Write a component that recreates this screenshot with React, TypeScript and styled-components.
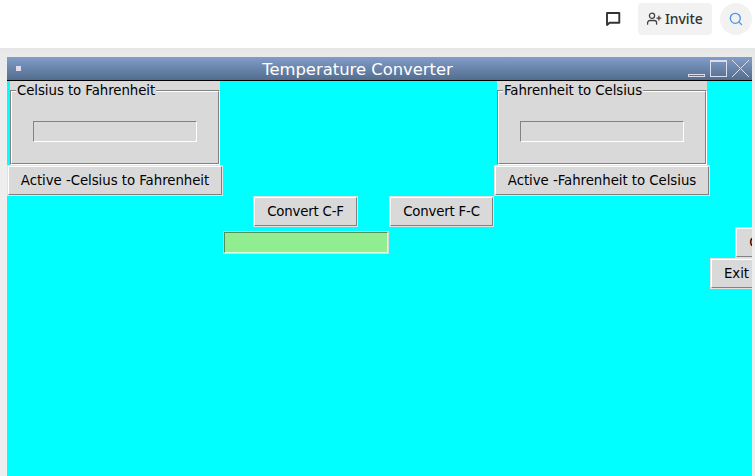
import React from "react";
import styled, { createGlobalStyle } from "styled-components";

const GlobalStyle = createGlobalStyle`
  * { box-sizing: border-box; }
  html, body, #root { height: 100%; }
  body { margin: 0; overflow: hidden; background: #eeeeee; }
`;

const Page = styled.div`
  display: flex;
  flex-direction: column;
  width: 755px;
  height: 476px;
  overflow: hidden;
  background: #eeeeee;
`;

const Header = styled.header`
  display: flex;
  justify-content: flex-end;
  flex: 0 0 48px;
  padding: 3px 3px 0 0;
  background: #ffffff;
`;

const ChatButton = styled.button`
  display: flex;
  width: 32px;
  height: 32px;
  margin-right: 9px;
  padding: 8px;
  border: 0;
  background: none;
`;

const InviteButton = styled.button`
  display: flex;
  align-items: center;
  gap: 3px;
  width: 74px;
  height: 32px;
  margin-right: 8px;
  padding: 0 0 0 8px;
  border: 0;
  border-radius: 4px;
  background: #f2f2f2;
  color: #333333;
  font: 500 14px/32px "Noto Sans", sans-serif;
  letter-spacing: -0.1px;
  white-space: nowrap;
`;

const SearchButton = styled.button`
  display: flex;
  align-items: center;
  justify-content: center;
  width: 32px;
  height: 32px;
  padding: 0;
  border: 0;
  border-radius: 50%;
  background: #f2f2f2;
`;

const Workspace = styled.main`
  flex: 1;
  min-height: 0;
  padding: 9px 3px 0 7px;
  background: linear-gradient(#e5e5e5, #e9e9e9 5px, #eeeeee 40px);
`;

const Window = styled.section`
  display: flex;
  flex-direction: column;
  height: 100%;
  overflow: hidden;
  background: #00ffff;
`;

const TitleBar = styled.div`
  display: grid;
  grid-template-columns: 64px 1fr 64px;
  grid-template-rows: 23px;
  flex: 0 0 24px;
  border-bottom: 1px solid #000000;
  background: linear-gradient(#829dc9, #526d8d);
`;

const WindowMenu = styled.div`
  width: 5px;
  height: 5px;
  margin: 9px 0 0 9px;
  background: #dddcec;
`;

const Title = styled.h1`
  margin: 0;
  padding: 0 44px 0 0;
  color: #ffffff;
  font: 400 16.4px/26px "DejaVu Sans", sans-serif;
  text-align: center;
  white-space: nowrap;
`;

const Body = styled.div`
  display: grid;
  grid-template-columns: 216px 166px 105px 216px 100px;
  grid-template-rows: 84px repeat(4, 31px);
  justify-items: center;
  align-items: center;
  color: #000000;
  font: 13.33px "DejaVu Sans", sans-serif;
`;

const Cell = styled.div<{ $col: number; $row: number; $indent?: number }>`
  grid-column: ${(p) => p.$col};
  grid-row: ${(p) => p.$row};
  justify-self: ${(p) => (p.$indent === undefined ? "center" : "start")};
  margin-left: ${(p) => p.$indent ?? 0}px;
`;

const Group = styled.fieldset`
  width: 210px;
  height: 84px;
  min-width: 0;
  margin: 0;
  padding: 9px 0 0;
  border: 0;
  background: #d9d9d9;
`;

const Groove = styled.div`
  height: 75px;
  border: 1px solid;
  border-color: #828282 #ffffff #ffffff #828282;
`;

const GrooveInner = styled.div`
  height: 73px;
  padding: 0 0 0 4px;
  border: 1px solid;
  border-color: #ffffff #828282 #828282 #ffffff;
`;

const Caption = styled.div`
  width: max-content;
  height: 18px;
  margin-top: -10px;
  padding: 0 1px;
  background: #d9d9d9;
  line-height: 18px;
  letter-spacing: -0.07px;
  white-space: nowrap;
`;

const Entry = styled.input`
  display: block;
  width: 164px;
  height: 21px;
  margin: 21px 0 0 17px;
  padding: 0;
  border: 1px solid;
  border-color: #828282 #ffffff #ffffff #828282;
  border-radius: 0;
  outline: 0;
  background: #d9d9d9;
`;

const ResultFrame = styled.div`
  width: 166px;
  height: 23px;
  border: 1px solid #d9d9d9;
`;

const Result = styled.div`
  height: 21px;
  border: 1px solid;
  border-color: #568f56 #d8ffd8 #d8ffd8 #568f56;
  background: #90ee90;
`;

const ButtonFrame = styled.button<{ $width: number }>`
  display: block;
  width: ${(p) => p.$width}px;
  height: 31px;
  padding: 0;
  border: 1px solid #e2e2e2;
  background: #d9d9d9;
  color: #000000;
  font: inherit;
`;

const ButtonFace = styled.span<{ $tracking: number }>`
  display: block;
  height: 29px;
  border: 1px solid;
  border-color: #ffffff #828282 #828282 #ffffff;
  line-height: 27px;
  letter-spacing: ${(p) => p.$tracking}px;
  text-align: center;
  white-space: nowrap;
`;

function TkButton({ width, tracking = -0.05, children }: { width: number; tracking?: number; children: React.ReactNode }) {
  return (
    <ButtonFrame $width={width}>
      <ButtonFace $tracking={tracking}>{children}</ButtonFace>
    </ButtonFrame>
  );
}

function LabelFrame({ title }: { title: string }) {
  return (
    <Group>
      <Groove>
        <GrooveInner>
          <Caption>{title}</Caption>
          <Entry aria-label={title} />
        </GrooveInner>
      </Groove>
    </Group>
  );
}

export default function App() {
  return (
    <>
      <GlobalStyle />
      <Page>
        <Header>
          <ChatButton aria-label="Chat">
            <svg width="16" height="16" viewBox="0 0 16 16" fill="none" stroke="#333" strokeWidth="1.9" strokeLinejoin="round">
              <path d="M2 14V2h12.3v9.8H4.6z" />
            </svg>
          </ChatButton>
          <InviteButton>
            <svg width="16" height="16" viewBox="0 0 16 16" fill="none" stroke="#444" strokeWidth="1.3" strokeLinecap="round">
              <circle cx="6" cy="4.8" r="2.6" />
              <path d="M1.6 13.2v-1.4a2.3 2.3 0 0 1 2.3-2.3h4.4a2.3 2.3 0 0 1 2.3 2.3v1.4M12.9 5.1v4M10.9 7.1h4" />
            </svg>
            Invite
          </InviteButton>
          <SearchButton aria-label="Search">
            <svg width="16" height="16" viewBox="0 0 16 16" fill="none" stroke="#4b94ed" strokeWidth="1.3" strokeLinecap="round">
              <circle cx="7.3" cy="7.3" r="5" />
              <path d="m11 11 2.6 2.6" />
            </svg>
          </SearchButton>
        </Header>
        <Workspace>
          <Window>
            <TitleBar>
              <WindowMenu />
              <Title>Temperature Converter</Title>
              <svg width="64" height="23" viewBox="0 0 64 23" fill="none" stroke="#dddcec" shapeRendering="crispEdges">
                <path d="M.5 17.5h16v2H.5zM22.5 3.5h16v16h-16zM22 4.5h17" />
                <path d="m44 3 17 17m0-17-17 17" />
              </svg>
            </TitleBar>
            <Body>
              <Cell $col={1} $row={1}><LabelFrame title="Celsius to Fahrenheit" /></Cell>
              <Cell $col={4} $row={1}><LabelFrame title="Fahrenheit to Celsius" /></Cell>
              <Cell $col={1} $row={2}><TkButton width={216}>Active -Celsius to Fahrenheit</TkButton></Cell>
              <Cell $col={4} $row={2}><TkButton width={216}>Active -Fahrenheit to Celsius</TkButton></Cell>
              <Cell $col={2} $row={3} $indent={30}><TkButton width={105} tracking={-0.2}>Convert C-F</TkButton></Cell>
              <Cell $col={3} $row={3}><TkButton width={105} tracking={-0.2}>Convert F-C</TkButton></Cell>
              <Cell $col={2} $row={4}><ResultFrame><Result /></ResultFrame></Cell>
              <Cell $col={5} $row={4} $indent={25}><TkButton width={63}>Clear</TkButton></Cell>
              <Cell $col={5} $row={5} $indent={0}><TkButton width={53}>Exit</TkButton></Cell>
            </Body>
          </Window>
        </Workspace>
      </Page>
    </>
  );
}
